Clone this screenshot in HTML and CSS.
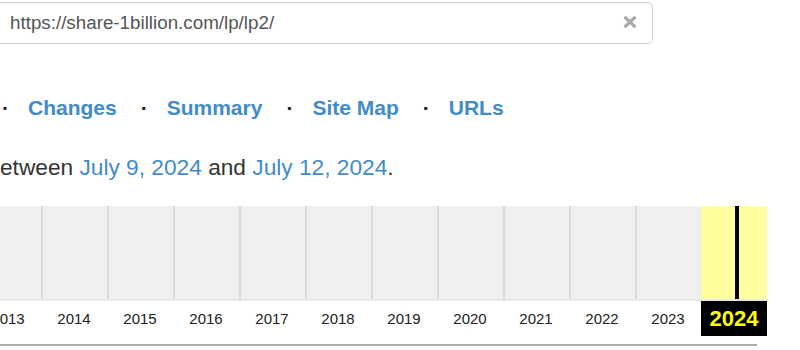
FILE: index.html
```html
<!DOCTYPE html>
<html lang="en">
<head>
<meta charset="utf-8">
<title>Timeline</title>
<link rel="stylesheet" href="styles.css">
</head>
<body>
<div class="page">
  <div class="url-box">
    <span class="url">https://share-1billion.com/lp/lp2/</span>
    <svg class="clear" width="14" height="12" viewBox="0 0 14 12" aria-hidden="true">
      <path d="M1.5 0.8 L12.5 11.2 M12.5 0.8 L1.5 11.2" stroke="#a9a9a9" stroke-width="3.2" fill="none"/>
    </svg>
  </div>

  <nav class="nav">
    <span class="dot">·</span><a href="#">Changes</a>
    <span class="dot">·</span><a href="#">Summary</a>
    <span class="dot">·</span><a href="#">Site Map</a>
    <span class="dot">·</span><a href="#">URLs</a>
  </nav>

  <p class="range">etween <a href="#">July 9, 2024</a> and <a href="#">July 12, 2024</a>.</p>

  <div class="timeline">
    <div class="bars">
      <div class="bar"></div>
      <div class="bar"></div>
      <div class="bar"></div>
      <div class="bar"></div>
      <div class="bar"></div>
      <div class="bar"></div>
      <div class="bar"></div>
      <div class="bar"></div>
      <div class="bar"></div>
      <div class="bar"></div>
      <div class="bar"></div>
      <div class="bar current"><span class="marker" style="left:34px"></span></div>
    </div>
    <div class="years">
      <span class="year">2013</span>
      <span class="year">2014</span>
      <span class="year">2015</span>
      <span class="year">2016</span>
      <span class="year">2017</span>
      <span class="year">2018</span>
      <span class="year">2019</span>
      <span class="year">2020</span>
      <span class="year">2021</span>
      <span class="year">2022</span>
      <span class="year">2023</span>
      <span class="year current">2024</span>
    </div>
  </div>
  <div class="rule"></div>
</div>
</body>
</html>
```

FILE: styles.css
```css
html, body {
  margin: 0;
  padding: 0;
  background: #fff;
}
body {
  font-family: "Liberation Sans", Arial, sans-serif;
  color: #333;
  overflow: hidden;
  width: 800px;
  height: 350px;
}
.page {
  padding-top: 2px;
}
.url-box {
  box-sizing: border-box;
  margin-left: -10px;
  width: 663px;
  height: 42px;
  border: 1px solid #cfcfcf;
  border-radius: 5px;
  display: flex;
  align-items: center;
  justify-content: space-between;
  padding: 0 15px 0 19px;
  box-shadow: inset 0 1px 1px rgba(0,0,0,0.05);
}
.url {
  font-size: 18.8px;
  color: #555;
}
.clear {
  display: block;
  margin-top: -2px;
}
.nav {
  display: flex;
  align-items: baseline;
  margin-top: 52px;
  padding-left: 2px;
  font-size: 21px;
  font-weight: bold;
  line-height: 24px;
}
.nav .dot {
  display: inline-block;
  width: 26px;
  color: #222;
}
.nav a {
  color: #428bca;
  text-decoration: none;
  margin-right: 24px;
}
.range {
  margin: 34px 0 0 0;
  font-size: 22.7px;
  line-height: 26px;
  color: #333;
}
.range a {
  color: #428bca;
  text-decoration: none;
}
.timeline {
  margin-top: 26px;
  margin-left: -25px;
  width: 792px;
}
.bars {
  display: grid;
  grid-template-columns: repeat(12, 66px);
  height: 93px;
  border-bottom: 2px solid #e8e8e8;
}
.bar {
  background: #efefef;
  border-left: 2px solid #dadada;
}
.bar.current {
  position: relative;
  background: #ffffa0;
  border-left: none;
}
.marker {
  position: absolute;
  top: 0;
  bottom: 0;
  width: 4px;
  background: #000;
}
.years {
  display: grid;
  grid-template-columns: repeat(12, 66px);
  height: 35px;
}
.year {
  text-align: center;
  font-size: 15px;
  line-height: 35px;
  color: #222;
}
.year.current {
  background: #000;
  color: #ffff00;
  font-weight: bold;
  font-size: 22px;
}
.rule {
  margin-top: 8px;
  width: 757px;
  height: 2px;
  background: #aaa;
}
```
